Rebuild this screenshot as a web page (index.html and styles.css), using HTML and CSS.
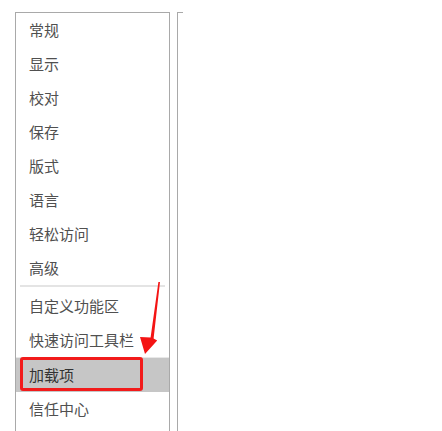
FILE: index.html
```html
<!DOCTYPE html>
<html lang="zh-CN">
<head>
<meta charset="utf-8">
<title>选项</title>
<link rel="stylesheet" href="styles.css">
</head>
<body>
<div class="page">
  <nav class="side">
    <div class="item">常规</div>
    <div class="item">显示</div>
    <div class="item">校对</div>
    <div class="item">保存</div>
    <div class="item">版式</div>
    <div class="item">语言</div>
    <div class="item">轻松访问</div>
    <div class="item">高级</div>
    <div class="sep"></div>
    <div class="item">自定义功能区</div>
    <div class="item">快速访问工具栏</div>
    <div class="sep thin"></div>
    <div class="item active">加载项<span class="mark"></span></div>
    <div class="item">信任中心</div>
  </nav>
  <div class="content"></div>
</div>
<svg class="arrow" width="442" height="431" viewBox="0 0 442 431">
  <polygon points="158.4,282 160,282 153.6,338.5 157.2,340.5 145,354 140,337 150.6,337.5" fill="#f41414"/>
</svg>
</body>
</html>
```

FILE: styles.css
```css
html, body {
  margin: 0;
  padding: 0;
  background: #ffffff;
}

body {
  font-family: "Noto Sans CJK SC", "Noto Sans", sans-serif;
  width: 442px;
  height: 431px;
  overflow: hidden;
  position: relative;
}

.page {
  display: flex;
  align-items: flex-start;
  padding: 12px 0 0 15px;
}

.side {
  width: 153px;
  height: 418px;
  border: 1px solid #a9a9a9;
  border-bottom: none;
  display: flex;
  flex-direction: column;
  overflow: hidden;
}

.item {
  position: relative;
  height: 34px;
  line-height: 34px;
  padding-left: 13px;
  font-size: 15px;
  color: #505050;
  white-space: nowrap;
  flex: none;
}

.item.active {
  background: #c6c6c6;
  color: #333333;
}

.mark {
  position: absolute;
  left: 4px;
  top: -1px;
  width: 117px;
  height: 28px;
  border: 3px solid #f21b1b;
  border-radius: 3px;
}

.sep {
  flex: none;
  height: 2px;
  margin: 0 4px 2px 4px;
  background: #e4e4e4;
}

.sep.thin {
  height: 1px;
  margin: 0;
  background: #e8e8e8;
}

.content {
  margin-left: 7px;
  width: 5px;
  height: 418px;
  border-left: 1px solid #a9a9a9;
  border-top: 1px solid #a9a9a9;
}

.arrow {
  position: absolute;
  left: 0;
  top: 0;
  pointer-events: none;
}
```
